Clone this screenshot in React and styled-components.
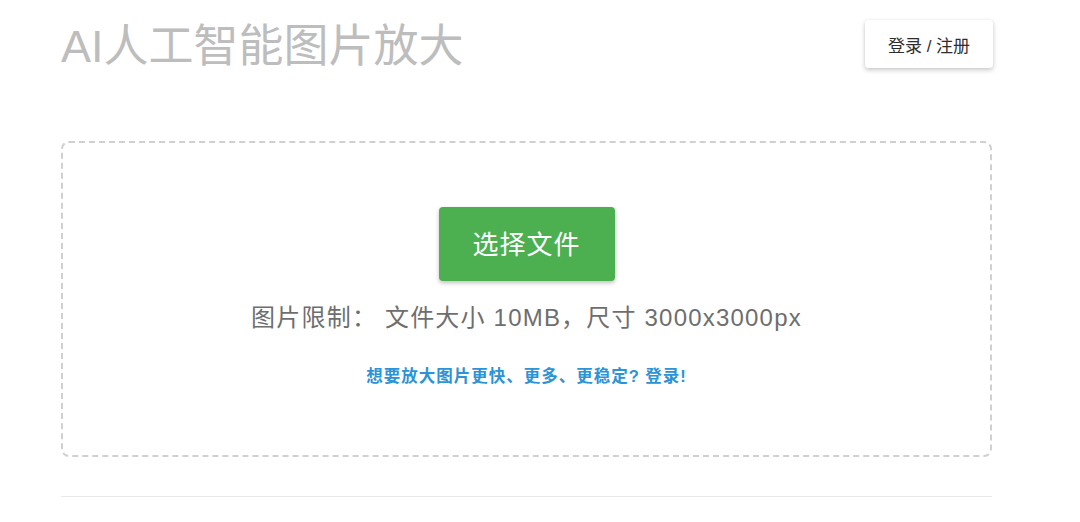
import React from 'react'
import styled, { createGlobalStyle } from 'styled-components'

const GlobalStyle = createGlobalStyle`
  html, body {
    margin: 0;
    padding: 0;
    background: #ffffff;
  }
  body {
    font-family: "Liberation Sans", "Noto Sans CJK SC", sans-serif;
  }
`

const App = () => {
  return (
    <>
      <GlobalStyle />
      <StyledPage>
        <Header>
          <Title>AI人工智能图片放大</Title>
          <LoginButton>登录 / 注册</LoginButton>
        </Header>
        <DropZone>
          <PickButton>选择文件</PickButton>
          <Limits>图片限制： 文件大小 10MB，尺寸 3000x3000px</Limits>
          <Hint>想要放大图片更快、更多、更稳定? 登录!</Hint>
        </DropZone>
        <Divider />
      </StyledPage>
    </>
  )
}

export default App

const StyledPage = styled.div`
  width: 931px;
  padding: 20px 0 0 61px;
`

const Header = styled.div`
  display: flex;
  justify-content: space-between;
  align-items: flex-start;
  height: 121px;
`

const Title = styled.h1`
  margin: 3px 0 0 0;
  font-family: "Liberation Sans", "Noto Sans CJK SC", sans-serif;
  font-weight: 400;
  font-size: 45px;
  line-height: 48px;
  color: #bdbdbd;
`

const LoginButton = styled.button`
  width: 128px;
  height: 48px;
  margin-right: -1px;
  border: none;
  border-radius: 3px;
  background: #ffffff;
  box-shadow: 0 2px 5px rgba(0, 0, 0, 0.22), 0 0 1px rgba(0, 0, 0, 0.12);
  font-family: "Liberation Sans", "Noto Sans CJK SC", sans-serif;
  font-size: 17px;
  color: #2e2e2e;
  cursor: pointer;
`

const DropZone = styled.div`
  box-sizing: border-box;
  height: 316px;
  border: 2px dashed #d0d0d0;
  border-radius: 8px;
  display: flex;
  flex-direction: column;
  align-items: center;
  padding-top: 64px;
`

const PickButton = styled.button`
  width: 176px;
  height: 74px;
  border: none;
  border-radius: 4px;
  background: #4caf50;
  box-shadow: 0 2px 4px rgba(0, 0, 0, 0.25);
  font-family: "Liberation Sans", "Noto Sans CJK SC", sans-serif;
  font-size: 26px;
  color: #ffffff;
  letter-spacing: 1px;
  padding-bottom: 4px;
  cursor: pointer;
`

const Limits = styled.p`
  margin: 21px 0 0 0;
  font-family: "Liberation Sans", "Noto Sans CJK SC", sans-serif;
  font-size: 24px;
  line-height: 32px;
  letter-spacing: 1.2px;
  color: #6e6e6e;
`

const Hint = styled.a`
  margin-top: 29px;
  font-family: "Liberation Sans", "Noto Sans CJK SC", sans-serif;
  font-weight: 700;
  font-size: 16.5px;
  letter-spacing: 1px;
  color: #2b93d6;
  text-decoration: none;
  cursor: pointer;
`

const Divider = styled.div`
  height: 1px;
  margin-top: 39px;
  background: #e8e8e8;
`
